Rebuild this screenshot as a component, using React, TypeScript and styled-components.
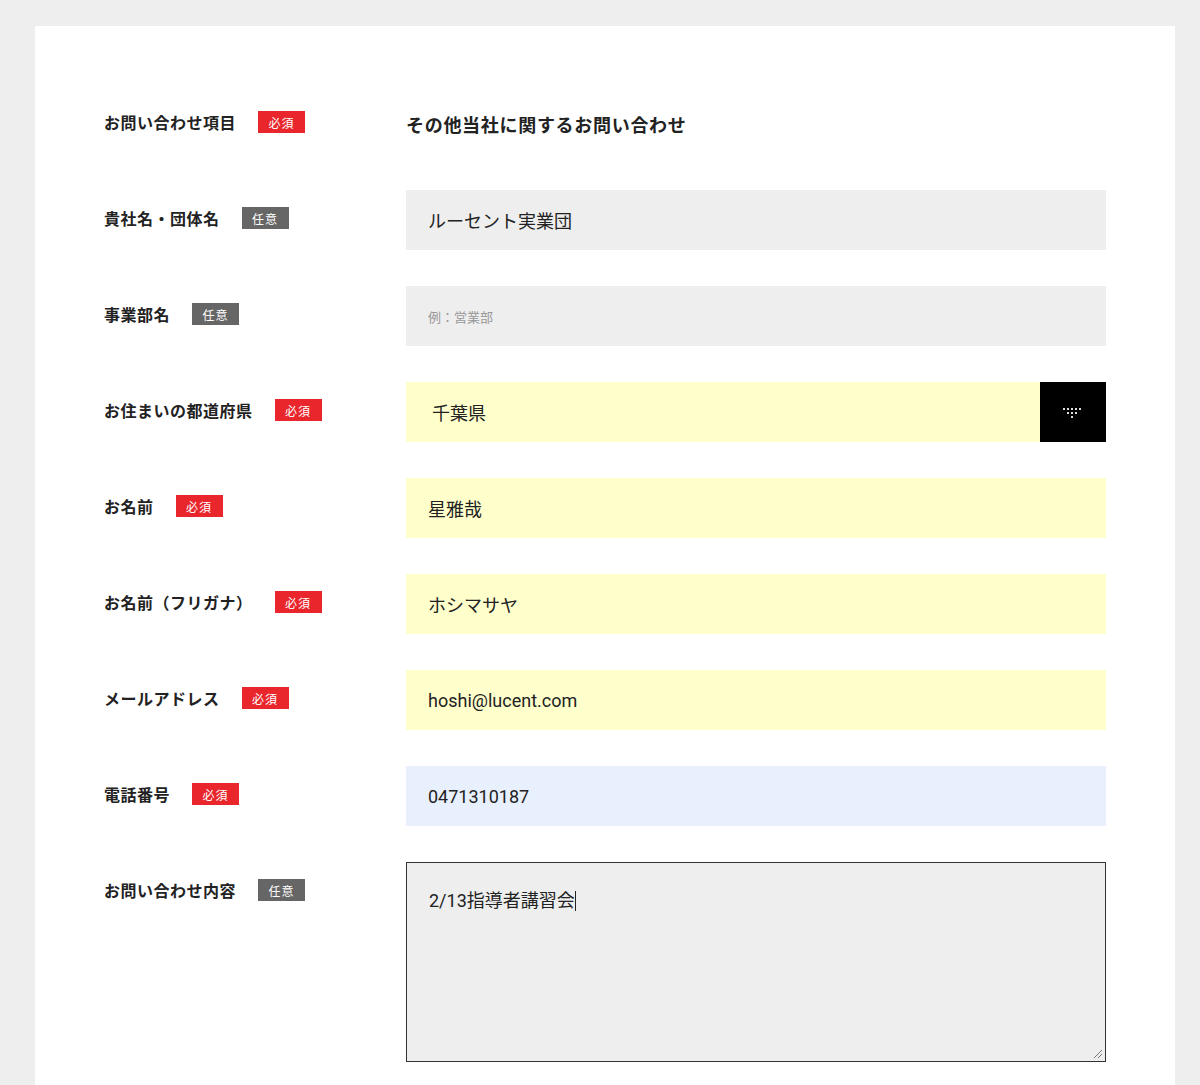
import React from "react";
import styled, { createGlobalStyle } from "styled-components";

const Global = createGlobalStyle`
  html, body { margin: 0; padding: 0; background: #eeeeee; }
  body { font-family: Roboto, "Noto Sans CJK JP", sans-serif; color: #222; }
`;

const Page = styled.div`
  padding: 26px 25px 0 35px;
  height: 1085px;
  box-sizing: border-box;
  overflow: hidden;
`;

const Panel = styled.div`
  background: #fff;
  padding: 68px 69px 40px 69px;
  height: 1100px;
  box-sizing: border-box;
  display: flex;
  flex-direction: column;
  gap: 36px;
`;

const Row = styled.div`
  display: grid;
  grid-template-columns: 302px 700px;
  align-items: start;
`;

const LabelCell = styled.div`
  display: flex;
  align-items: center;
  gap: 22px;
  padding-top: 17px;
  height: 22px;
`;

const Label = styled.span`
  font-family: "Noto Sans CJK JP", sans-serif;
  font-weight: 700;
  font-size: 16px;
  letter-spacing: 0.5px;
  color: #222;
`;

const Badge = styled.span<{ $req: boolean }>`
  display: inline-flex;
  align-items: center;
  justify-content: center;
  width: 47px;
  height: 22px;
  font-family: "Noto Sans CJK JP", sans-serif;
  font-size: 12px;
  letter-spacing: 1px;
  color: #fff;
  background: ${(p) => (p.$req ? "#e8262c" : "#666666")};
`;

const Static = styled.div`
  height: 60px;
  display: flex;
  align-items: center;
  font-family: "Noto Sans CJK JP", sans-serif;
  font-weight: 700;
  font-size: 18px;
  letter-spacing: 0.7px;
  color: #222;
`;

const Field = styled.div<{ $bg: string }>`
  height: 60px;
  background: ${(p) => p.$bg};
  display: flex;
  align-items: center;
  padding-left: 22px;
  font-size: 18px;
  color: #222;
  font-family: Roboto, "Noto Sans CJK JP", sans-serif;
`;

const Placeholder = styled.span`
  font-size: 13px;
  color: #999;
  font-family: "Noto Sans CJK JP", sans-serif;
`;

const SelectWrap = styled.div`
  height: 60px;
  display: flex;
  background: #ffffcc;
`;

const SelectText = styled.div`
  flex: 1;
  display: flex;
  align-items: center;
  padding-left: 26px;
  font-size: 18px;
  font-family: "Noto Sans CJK JP", sans-serif;
`;

const SelectBtn = styled.div`
  width: 66px;
  background: #000;
  display: flex;
  align-items: center;
  justify-content: center;
`;

const TextArea = styled.div`
  height: 200px;
  box-sizing: border-box;
  background: #eeeeee;
  border: 1px solid #333;
  padding: 23px 0 0 22px;
  font-size: 18px;
  font-family: Roboto, "Noto Sans CJK JP", sans-serif;
  position: relative;
`;

const Caret = styled.span`
  display: inline-block;
  width: 1px;
  height: 20px;
  background: #222;
  vertical-align: -4px;
`;

const Grip = styled.svg`
  position: absolute;
  right: 2px;
  bottom: 2px;
`;

const Dots = () => (
  <svg width="26" height="12" viewBox="0 0 26 12">
    {[0, 4, 8, 12, 16].map((x) => (
      <rect key={"a" + x} x={3 + x} y={2} width={2} height={2} fill="#ddd" />
    ))}
    {[4, 8, 12].map((x) => (
      <rect key={"b" + x} x={3 + x} y={6} width={2} height={2} fill="#ddd" />
    ))}
    <rect x={11} y={10} width={2} height={2} fill="#ddd" />
  </svg>
);

const L = ({ t, req }: { t: string; req: boolean }) => (
  <LabelCell>
    <Label>{t}</Label>
    <Badge $req={req}>{req ? "必須" : "任意"}</Badge>
  </LabelCell>
);

export default function App() {
  return (
    <>
      <Global />
      <Page>
        <Panel>
          <Row>
            <L t="お問い合わせ項目" req />
            <Static>その他当社に関するお問い合わせ</Static>
          </Row>
          <Row>
            <L t="貴社名・団体名" req={false} />
            <Field $bg="#eeeeee">ルーセント実業団</Field>
          </Row>
          <Row>
            <L t="事業部名" req={false} />
            <Field $bg="#eeeeee">
              <Placeholder>例：営業部</Placeholder>
            </Field>
          </Row>
          <Row>
            <L t="お住まいの都道府県" req />
            <SelectWrap>
              <SelectText>千葉県</SelectText>
              <SelectBtn>
                <Dots />
              </SelectBtn>
            </SelectWrap>
          </Row>
          <Row>
            <L t="お名前" req />
            <Field $bg="#ffffcc">星雅哉</Field>
          </Row>
          <Row>
            <L t="お名前（フリガナ）" req />
            <Field $bg="#ffffcc">ホシマサヤ</Field>
          </Row>
          <Row>
            <L t="メールアドレス" req />
            <Field $bg="#ffffcc">hoshi@lucent.com</Field>
          </Row>
          <Row>
            <L t="電話番号" req />
            <Field $bg="#e8f0fe">0471310187</Field>
          </Row>
          <Row>
            <L t="お問い合わせ内容" req={false} />
            <TextArea>
              2/13指導者講習会
              <Caret />
              <Grip width="12" height="12" viewBox="0 0 12 12">
                <path d="M11 3 L3 11 M11 7 L7 11" stroke="#777" strokeWidth="1" />
              </Grip>
            </TextArea>
          </Row>
        </Panel>
      </Page>
    </>
  );
}
